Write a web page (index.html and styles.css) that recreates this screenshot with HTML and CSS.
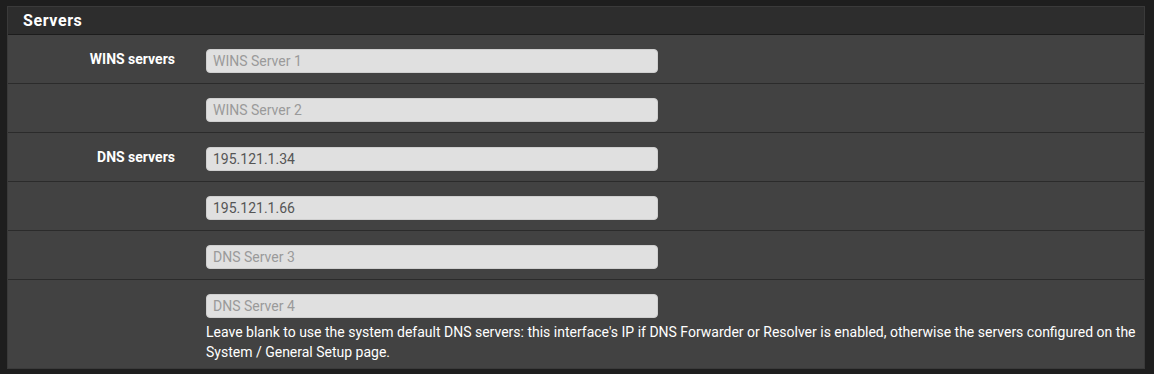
FILE: index.html
```html
<!DOCTYPE html>
<html>
<head>
<meta charset="utf-8">
<link rel="stylesheet" href="styles.css">
</head>
<body>
<div class="panel">
  <div class="panel-heading"><h2 class="panel-title">Servers</h2></div>
  <div class="panel-body">
    <div class="form-group">
      <label class="col-label">WINS servers</label>
      <div class="col-field"><input class="form-control" type="text" placeholder="WINS Server 1"></div>
    </div>
    <div class="form-group">
      <label class="col-label"></label>
      <div class="col-field"><input class="form-control" type="text" placeholder="WINS Server 2"></div>
    </div>
    <div class="form-group">
      <label class="col-label">DNS servers</label>
      <div class="col-field"><input class="form-control" type="text" value="195.121.1.34" placeholder="DNS Server 1"></div>
    </div>
    <div class="form-group">
      <label class="col-label"></label>
      <div class="col-field"><input class="form-control" type="text" value="195.121.1.66" placeholder="DNS Server 2"></div>
    </div>
    <div class="form-group">
      <label class="col-label"></label>
      <div class="col-field"><input class="form-control" type="text" placeholder="DNS Server 3"></div>
    </div>
    <div class="form-group last">
      <label class="col-label"></label>
      <div class="col-field wide">
        <input class="form-control" type="text" placeholder="DNS Server 4">
        <span class="help-block">Leave blank to use the system default DNS servers: this interface's IP if DNS Forwarder or Resolver is enabled, otherwise the servers configured on the System / General Setup page.</span>
      </div>
    </div>
  </div>
</div>
</body>
</html>
```

FILE: styles.css
```css
html, body {
  margin: 0;
  padding: 0;
  background: #1e1e1e;
  font-family: Roboto, "Liberation Sans", Arial, sans-serif;
  font-size: 14px;
  color: #ffffff;
}
body {
  padding: 6px 7px 0 7px;
}
.panel {
  background: #424242;
  border: 1px solid #3a3a3a;
  width: 1138px;
  box-sizing: border-box;
}
.panel-heading {
  background: #2d2d2d;
  height: 27px;
  border-bottom: 1px solid #1c1c1c;
  display: flex;
  align-items: center;
  padding-left: 15px;
}
.panel-title {
  margin: 0;
  font-size: 16px;
  font-weight: 700;
  letter-spacing: 0.6px;
  color: #ffffff;
}
.form-group {
  display: flex;
  align-items: flex-start;
  padding: 14px 0 10px 0;
  border-bottom: 1px solid #2b2b2b;
}
.form-group.last {
  border-bottom: none;
  padding-bottom: 6px;
}
.col-label {
  width: 167px;
  flex: none;
  text-align: right;
  font-weight: 700;
  font-size: 14px;
  line-height: 20px;
  color: #ffffff;
}
.col-field {
  margin-left: 31px;
  width: 452px;
}
.col-field.wide {
  width: 935px;
}
.form-control {
  display: block;
  box-sizing: border-box;
  width: 452px;
  height: 24px;
  padding: 2px 6px;
  font-family: Roboto, "Liberation Sans", Arial, sans-serif;
  font-size: 14px;
  color: #555555;
  background: #e0e0e0;
  border: 1px solid #cfcfcf;
  border-radius: 4px;
  outline: none;
}
.form-control::placeholder {
  color: #9a9a9a;
}
.help-block {
  display: block;
  margin-top: 4px;
  line-height: 20px;
  color: #ffffff;
  font-size: 14px;
}
```
